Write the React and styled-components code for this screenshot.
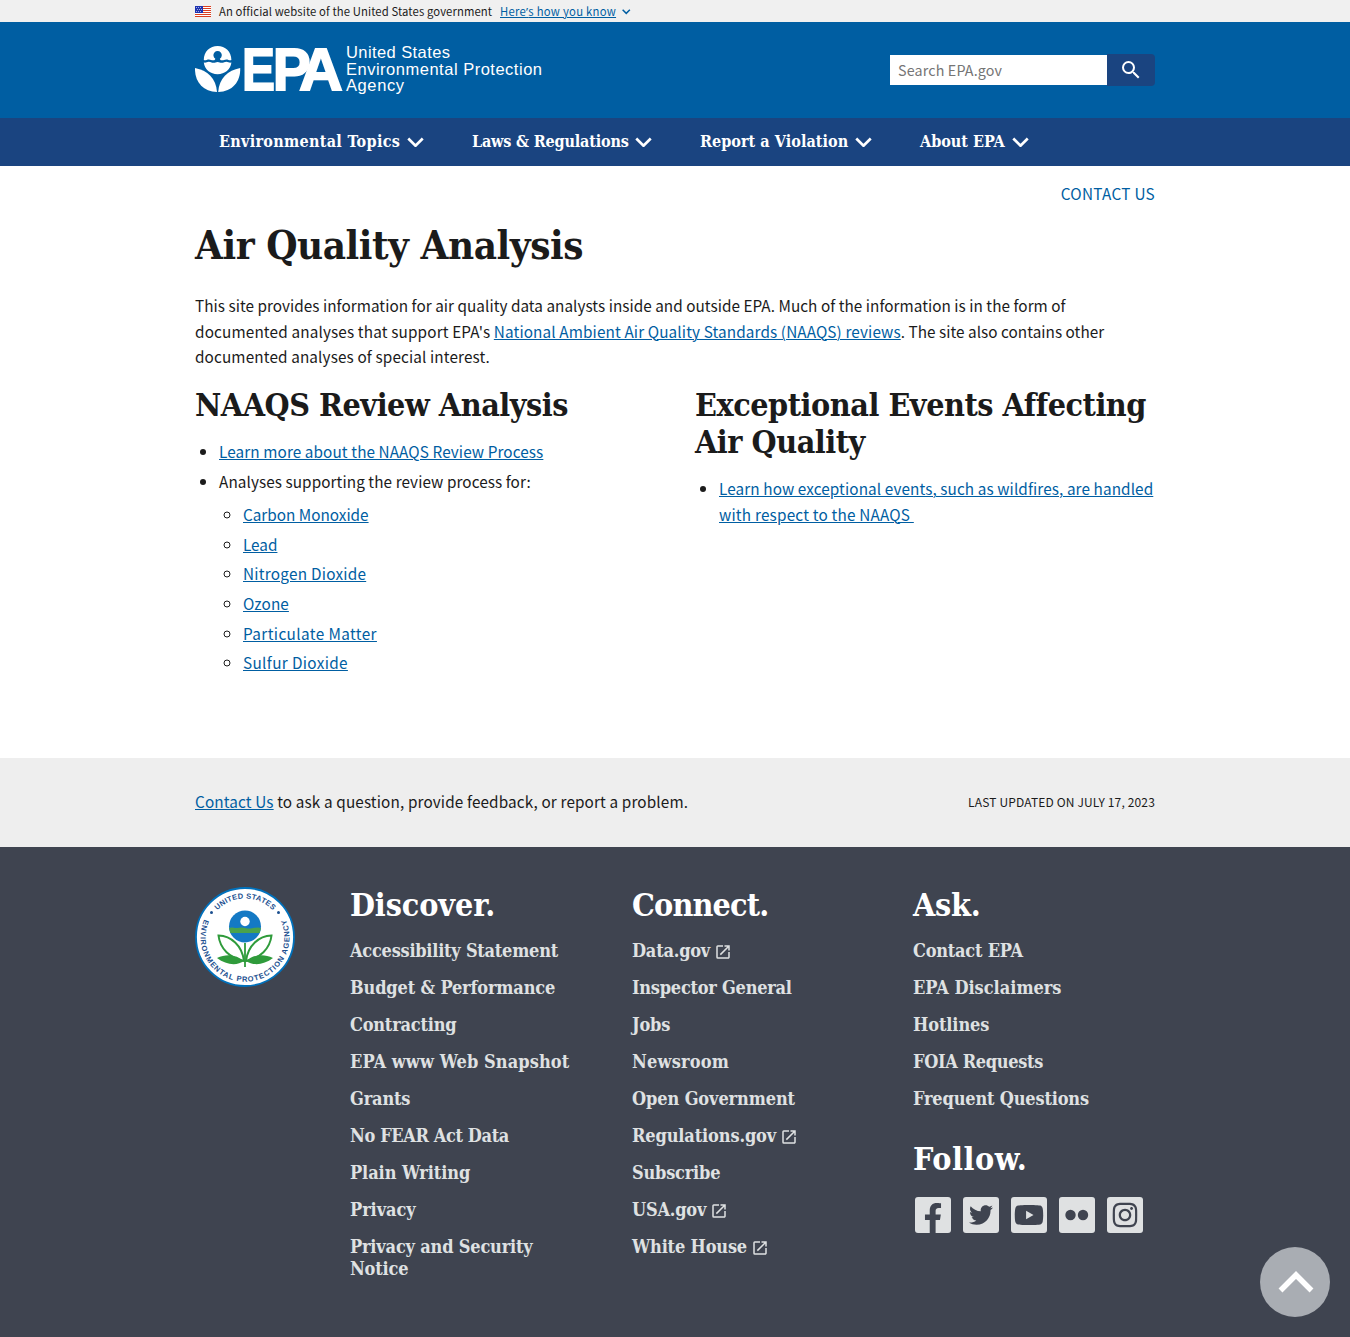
import React from "react";
import styled, { createGlobalStyle } from "styled-components";
import { MdOpenInNew, MdSearch } from "react-icons/md";
import { FaFacebookF, FaTwitter, FaYoutube, FaInstagram } from "react-icons/fa";

const sans = `"Noto Sans CJK SC", "Open Sans", sans-serif`;
const serif = `"DejaVu Serif Condensed", "DejaVu Serif", serif`;

const GlobalStyle = createGlobalStyle`
  * { box-sizing: border-box; }
  body { margin: 0; background: #fff; color: #1b1b1b; font-family: ${sans}; font-size: 15.3px; line-height: 25.44px; }
`;

const Track = styled.span`
  letter-spacing: ${(p) => p.$ls || 0}px;
`;
const Link = styled.a`
  color: #005ea2;
  letter-spacing: ${(p) => p.$ls || 0}px;
  text-decoration: ${(p) => (p.$plain ? "none" : "underline 1px")};
  text-underline-offset: 1px;
`;

const Container = styled.div`
  width: 960px;
  margin: 0 auto;
`;

/* ---------- banner ---------- */
const Banner = styled.div`
  background: #f0f0f0;
  height: 22px;
`;
const BannerInner = styled(Container)`
  display: flex;
  align-items: center;
  height: 22px;
  font-size: 11.3px;
  line-height: 22px;
`;
const Flag = styled.svg`
  width: 16px;
  height: 11px;
  margin-right: 8px;
`;
const BannerText = styled.span`
  width: 281px;
  white-space: nowrap;
  letter-spacing: 0.1px;
`;
const BannerLink = styled(Link)`
  width: 116px;
  margin-right: 6px;
  white-space: nowrap;
`;
const Apostrophe = styled.span`
  font-family: "Noto Sans", sans-serif;
`;
const BannerChevron = styled.span`
  display: flex;
  padding-top: 2px;
`;

/* ---------- header ---------- */
const Header = styled.header`
  background: #005ea2;
  height: 96px;
`;
const HeaderInner = styled(Container)`
  display: flex;
  justify-content: space-between;
  padding-top: 8px;
`;
const SearchForm = styled.form`
  display: flex;
  margin-top: 24px;
  height: 32px;
`;
const SearchInput = styled.input`
  width: 217px;
  height: 30px;
  margin: 1px 0;
  padding: 0 8px 2px;
  border: 0;
  background: #fff;
  font-family: ${sans};
  font-size: 14.3px;
  letter-spacing: 0.15px;
  &::placeholder { color: #757575; opacity: 1; }
`;
const SearchButton = styled.button`
  width: 48px;
  height: 32px;
  padding: 0;
  border: 0;
  border-radius: 0 4px 4px 0;
  background: #1a4480;
  color: #fff;
  display: flex;
  align-items: center;
  justify-content: center;
`;

/* ---------- nav ---------- */
const Nav = styled.nav`
  background: #1a4480;
  height: 48px;
`;
const NavInner = styled(Container)`
  display: flex;
  padding-left: 24px;
  gap: 48px;
`;
const NavItem = styled.a`
  display: flex;
  align-items: center;
  justify-content: space-between;
  width: ${(p) => p.$w}px;
  height: 48px;
  color: #fff;
  text-decoration: none;
  white-space: nowrap;
  font: 700 16px/20px ${serif};
`;

/* ---------- main ---------- */
const Main = styled.main`
  height: 592px;
`;
const ContactRow = styled.div`
  display: flex;
  justify-content: flex-end;
  padding-top: 15px;
`;
const H1 = styled.h1`
  margin: 14px 0 0;
  letter-spacing: -0.48px;
  font: 700 40px/50px ${serif};
`;
const Intro = styled.p`
  margin: 23px 0 0;
  white-space: nowrap;
`;
const Columns = styled.div`
  display: grid;
  grid-template-columns: 460px 460px;
  gap: 40px;
  margin-top: 17px;
`;
const H2 = styled.h2`
  margin: 0;
  white-space: nowrap;
  font: 700 32px/37.3px ${serif};
  letter-spacing: -0.47px;
`;
const List = styled.ul`
  margin: ${(p) => (p.$nested ? "8px 0 0" : "15px 0 0")};
  padding-left: 24px;
  list-style: ${(p) => (p.$nested ? "circle" : "disc")};
  white-space: nowrap;
`;
const Item = styled.li`
  margin-bottom: 4.2px;
`;

/* ---------- feedback strip ---------- */
const Strip = styled.div`
  background: #eee;
  height: 89px;
`;
const StripInner = styled(Container)`
  display: flex;
  align-items: center;
  justify-content: space-between;
  height: 88px;
`;
const Updated = styled.span`
  font-size: 12px;
  letter-spacing: 0.15px;
`;

/* ---------- footer ---------- */
const Footer = styled.footer`
  background: #3f4450;
  height: 490px;
  padding-top: 40px;
`;
const FooterInner = styled(Container)`
  display: grid;
  grid-template-columns: 155px 282px 281px 242px;
`;
const FootHeading = styled.h2`
  margin: ${(p) => (p.$later ? "31px 0 0" : "0")};
  color: #fff;
  font: 700 32px/36px ${serif};
  letter-spacing: ${(p) => p.$ls}px;
`;
const FootList = styled.ul`
  list-style: none;
  margin: 17px 0 0;
  padding: 0;
`;
const FootItem = styled.li`
  display: flex;
  align-items: center;
  gap: 4px;
  width: 225px;
  margin-bottom: 15px;
  color: #dfe1e2;
  font: 700 18px/22px ${serif};
  letter-spacing: ${(p) => p.$ls}px;
  svg { margin-top: 2px; }
`;
const Socials = styled.div`
  display: flex;
  gap: 12px;
  margin: 20px 0 0 2px;
`;
const Tile = styled.a`
  display: flex;
  justify-content: center;
  align-items: ${(p) => (p.$bottom ? "flex-end" : "center")};
  width: 36px;
  height: 36px;
  border-radius: 3px;
  background: #dfe1e2;
  color: #3f4450;
`;
const TopButton = styled.a`
  position: fixed;
  right: 20px;
  bottom: 20px;
  width: 70px;
  height: 70px;
  padding-left: 2px;
  border-radius: 50%;
  background: #a9adb3;
  display: flex;
  align-items: center;
  justify-content: center;
`;

function Chevron({ w, stroke, color }) {
  return (
    <svg width={w} height={w * 0.64} viewBox="0 0 16 10.2" fill="none">
      <path d="M1.2 1.4 8 8.2l6.8-6.8" stroke={color} strokeWidth={stroke} />
    </svg>
  );
}

function FlagIcon() {
  return (
    <Flag viewBox="0 0 16 11">
      <rect width="16" height="11" fill="#fff" />
      {[0, 2, 4, 6, 8, 10].map((y) => (
        <rect key={y} y={y} width="16" height="1" fill="#db3e1f" />
      ))}
      <rect width="8" height="7" fill="#1e33b1" />
      {[1, 3, 5].map((y) =>
        [1, 3, 5].map((x) => <rect key={`${x}-${y}`} x={x + (y === 3 ? 1 : 0)} y={y} width="1" height="1" fill="#a5adde" />)
      )}
    </Flag>
  );
}

function EpaLogo() {
  return (
    <svg width="350" height="80" viewBox="195 30 350 80" fill="#fff">
      <path d="M203.800 60C203.800 51.500 210 46 217.600 46s13.800 5.500 13.800 14c-2 .6-3-.6-5-.6s-2.500.8-4.500.8c-1.500 0-2-.7-2-1.500a4.200 4.200 0 1 0-4.600 0c0 .8-.5 1.500-2 1.500-2 0-2.500-.8-4.500-.8s-3 1.200-5 .6z" />
      <path d="M203.800 62.600c2.600.5 3-.9 5-.9s2.500 1.100 4.600 1.100 2.200-.8 4.200-.8 2.200.8 4.200.8 2.600-1.100 4.600-1.100 2.400 1.400 5 .9c-.8 7-6.500 11.600-13.800 11.600s-13-4.600-13.800-11.600z" />
      <path d="M195 68c12.500 2.500 21 10 22 24C203 91.500 194.500 82 195 68z" />
      <path d="M240.200 68c-12.500 2.500-21 10-22 24 14-.5 22.500-10 22-24z" />
      <g fontFamily="Liberation Sans, Arial, sans-serif" fontWeight="700" fontSize="60" stroke="#fff" strokeWidth="1.800">
        <text x="241.900" y="89.800" textLength="33" lengthAdjust="spacingAndGlyphs">E</text>
        <text x="272.800" y="89.800" textLength="38" lengthAdjust="spacingAndGlyphs">P</text>
        <text x="298.900" y="89.800" textLength="43.800" lengthAdjust="spacingAndGlyphs">A</text>
      </g>
      <g fontFamily="Liberation Sans, Arial, sans-serif" fontSize="16.500">
        <text x="346" y="58" textLength="104">United States</text>
        <text x="346" y="74.500" textLength="196">Environmental Protection</text>
        <text x="346" y="91" textLength="58">Agency</text>
      </g>
    </svg>
  );
}

function Seal() {
  return (
    <svg width="100" height="100" viewBox="0 0 100 100">
      <defs>
        <path id="seal-top" d="M11.500 50a38.500 38.500 0 0 1 77 0" />
        <path id="seal-bottom" d="M10.300 30.100A44.500 44.500 0 1 0 89.700 30.100" />
      </defs>
      <circle cx="50" cy="50" r="49" fill="#fff" stroke="#0071bc" strokeWidth="1.800" />
      <g fontFamily="Liberation Sans, Arial, sans-serif" fontWeight="700" fontSize="7.500" fill="#1b4f8f">
        <text><textPath href="#seal-top" startOffset="50%" textAnchor="middle" textLength="62">UNITED STATES</textPath></text>
        <text><textPath href="#seal-bottom" startOffset="50%" textAnchor="middle" textLength="176">ENVIRONMENTAL PROTECTION AGENCY</textPath></text>
      </g>
      <circle cx="16.500" cy="25.500" r="1.500" fill="#1b4f8f" />
      <circle cx="83.500" cy="25.500" r="1.500" fill="#1b4f8f" />
      <circle cx="50" cy="39.500" r="16" fill="#1479c4" />
      <path d="M34.200 41c3-1.500 5 .5 8 0s5-1 8 0 5 .5 8 0 5-1 7.700 0l-1.200 5H35.300z" fill="#4aa24c" />
      <circle cx="50" cy="34.500" r="4.700" fill="#fff" />
      <g fill="#fff" stroke="#2f9b3b" strokeWidth="2">
        <path d="M49 74C47 58 36 49 23.500 48.500 25 62 35 71 49 74z" />
        <path d="M51 74c2-16 13-25 25.500-25.500C75 62 65 71 51 74z" />
      </g>
      <path d="M22 71c10-5 20-3 27 3-7 5-18 4-27-3zM78 71c-10-5-20-3-27 3 7 5 18 4 27-3z" fill="#2f9b3b" />
      <path d="M50 56v24" stroke="#2f9b3b" strokeWidth="1.800" />
    </svg>
  );
}

/* label, item width, tracking */
const navItems = [
  ["Environmental Topics", 205, 0.3],
  ["Laws & Regulations", 180, -0.17],
  ["Report a Violation", 172, 0.05],
  ["About EPA", 109, 0],
];
/* label, tracking */
const pollutants = [
  ["Carbon Monoxide", 0],
  ["Lead", 0],
  ["Nitrogen Dioxide", 0.25],
  ["Ozone", 0.1],
  ["Particulate Matter", 0.39],
  ["Sulfur Dioxide", 0.36],
];
const discover = [
  ["Accessibility Statement", -0.24],
  ["Budget & Performance", -0.15],
  ["Contracting", -0.2],
  ["EPA www Web Snapshot", 0.1],
  ["Grants", -0.15],
  ["No FEAR Act Data", -0.37],
  ["Plain Writing", -0.08],
  ["Privacy", -0.05],
  ["Privacy and Security Notice", -0.18],
];
const connect = [
  ["Data.gov", -0.2, true],
  ["Inspector General", -0.24],
  ["Jobs", -0.2],
  ["Newsroom", 0.2],
  ["Open Government", -0.1],
  ["Regulations.gov", -0.13, true],
  ["Subscribe", -0.2],
  ["USA.gov", -0.2, true],
  ["White House", -0.17, true],
];
const ask = [
  ["Contact EPA", -0.22],
  ["EPA Disclaimers", 0],
  ["Hotlines", -0.1],
  ["FOIA Requests", -0.33],
  ["Frequent Questions", -0.17],
];

function FooterLinks({ items }) {
  return (
    <FootList>
      {items.map(([label, ls, external]) => (
        <FootItem key={label} $ls={ls}>
          <span>{label}</span>
          {external && <MdOpenInNew size={18} />}
        </FootItem>
      ))}
    </FootList>
  );
}

export default function App() {
  return (
    <>
      <GlobalStyle />
      <Banner>
        <BannerInner>
          <FlagIcon />
          <BannerText>An official website of the United States government</BannerText>
          <BannerLink href="#" $ls={0.26}>Here<Apostrophe>’</Apostrophe>s how you know</BannerLink>
          <BannerChevron><Chevron w={8.500} stroke={2.800} color="#005ea2" /></BannerChevron>
        </BannerInner>
      </Banner>
      <Header>
        <HeaderInner>
          <EpaLogo />
          <SearchForm>
            <SearchInput placeholder="Search EPA.gov" />
            <SearchButton type="button"><MdSearch size={24} /></SearchButton>
          </SearchForm>
        </HeaderInner>
      </Header>
      <Nav>
        <NavInner>
          {navItems.map(([label, w, ls]) => (
            <NavItem key={label} href="#" $w={w}>
              <Track $ls={ls}>{label}</Track>
              <Chevron w={17} stroke={2.500} color="#fff" />
            </NavItem>
          ))}
        </NavInner>
      </Nav>
      <Main>
        <Container>
          <ContactRow><Link $plain $ls={0.3} href="#">CONTACT US</Link></ContactRow>
          <H1>Air Quality Analysis</H1>
          <Intro>
            <Track $ls={0.04}>This site provides information for air quality data analysts inside and outside EPA. Much of the information is in the form of</Track><br />
            <Track $ls={0.15}>documented analyses that support EPA's </Track>
            <Link $ls={0.12} href="#">National Ambient Air Quality Standards (NAAQS) reviews</Link>
            <Track $ls={0.04}>. The site also contains other</Track><br />
            <Track $ls={0.13}>documented analyses of special interest.</Track>
          </Intro>
          <Columns>
            <section>
              <H2>NAAQS Review Analysis</H2>
              <List>
                <Item><Link $ls={0.1} href="#">Learn more about the NAAQS Review Process</Link></Item>
                <Item>
                  <Track $ls={0.08}>Analyses supporting the review process for:</Track>
                  <List $nested>
                    {pollutants.map(([label, ls]) => (
                      <Item key={label}><Link $ls={ls} href="#">{label}</Link></Item>
                    ))}
                  </List>
                </Item>
              </List>
            </section>
            <section>
              <H2>Exceptional Events Affecting<br />Air Quality</H2>
              <List>
                <Item>
                  <Link $ls={0.1} href="#">Learn how exceptional events, such as wildfires, are handled<br /><Track $ls={0.2}>with respect to the NAAQS&nbsp;</Track></Link>
                </Item>
              </List>
            </section>
          </Columns>
        </Container>
      </Main>
      <Strip>
        <StripInner>
          <span><Link $ls={0.13} href="#">Contact Us</Link><Track $ls={0.13}> to ask a question, provide feedback, or report a problem.</Track></span>
          <Updated>LAST UPDATED ON JULY 17, 2023</Updated>
        </StripInner>
      </Strip>
      <Footer>
        <FooterInner>
          <Seal />
          <section>
            <FootHeading $ls={-0.1}>Discover.</FootHeading>
            <FooterLinks items={discover} />
          </section>
          <section>
            <FootHeading $ls={-0.85}>Connect.</FootHeading>
            <FooterLinks items={connect} />
          </section>
          <section>
            <FootHeading $ls={-0.25}>Ask.</FootHeading>
            <FooterLinks items={ask} />
            <FootHeading $later $ls={0.55}>Follow.</FootHeading>
            <Socials>
              <Tile $bottom href="#"><FaFacebookF size={30} /></Tile>
              <Tile href="#"><FaTwitter size={24} /></Tile>
              <Tile href="#"><FaYoutube size={30} /></Tile>
              <Tile href="#">
                <svg width="24" height="12" viewBox="0 0 24 12" fill="currentColor"><circle cx="5.500" cy="6" r="5.200" /><circle cx="18" cy="6" r="5.200" /></svg>
              </Tile>
              <Tile href="#"><FaInstagram size={28} /></Tile>
            </Socials>
          </section>
        </FooterInner>
      </Footer>
      <TopButton href="#">
        <svg width="36" height="24" viewBox="0 0 36 24" fill="none"><path d="M2.500 20.500 18 5l15.500 15.500" stroke="#fff" strokeWidth="5.500" /></svg>
      </TopButton>
    </>
  );
}
